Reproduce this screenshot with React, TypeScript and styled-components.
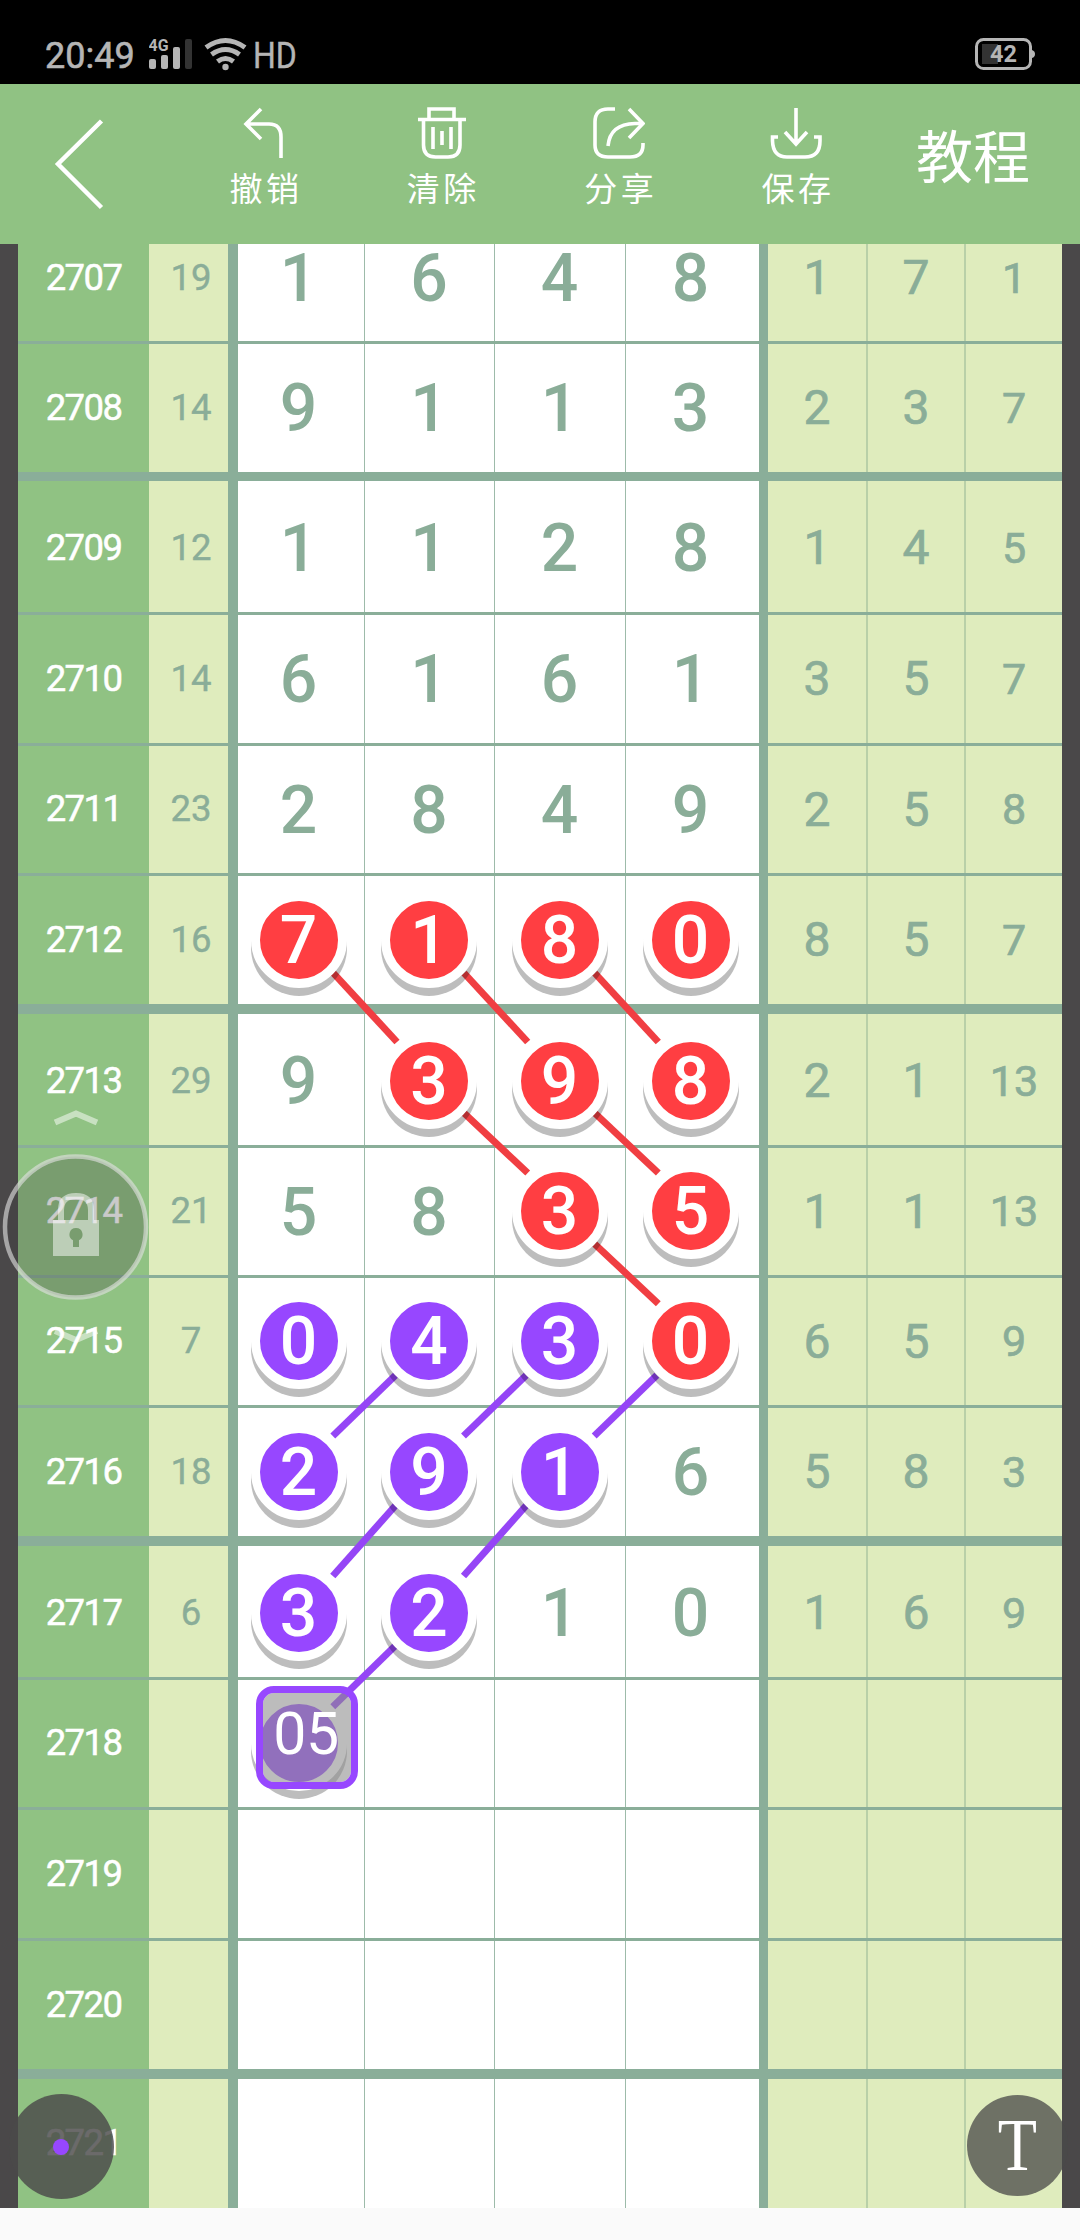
import React from "react";
import styled, { createGlobalStyle } from "styled-components";

const GREEN = "#90c283";
const LIME = "#dfecbd";
const LINE = "#8aae99";
const DIGIT = "#8aad98";
const RED = "#ff3e42";
const PURPLE = "#9747ff";

type Tone = "red" | "purple";
type Entry = { n: string; tone?: Tone };
type RowData = {
  id: string;
  h: number;
  rule: number;
  sum?: string;
  digits: Entry[];
  extra: string[];
};

const tones: Record<Tone, string> = { red: RED, purple: PURPLE };

/* "7r" is a red ball, "4p" a purple one, a bare digit is plain text. */
const parse = (s: string): Entry[] =>
  s.split(" ").map((t) => ({
    n: t[0] === "_" ? "" : t[0],
    tone: t[1] === "r" ? "red" : t[1] === "p" ? "purple" : undefined,
  }));

const row = (id: string, h: number, rule: number, sum = "", digits = "_ _ _ _", extra = ""): RowData => ({
  id, h, rule, sum, digits: parse(digits), extra: extra ? extra.split(" ") : ["", "", ""],
});

const rows: RowData[] = [
  row("2707", 129, 3, "19", "1 6 4 8", "1 7 1"),
  row("2708", 137, 9, "14", "9 1 1 3", "2 3 7"),
  row("2709", 134, 3, "12", "1 1 2 8", "1 4 5"),
  row("2710", 131, 3, "14", "6 1 6 1", "3 5 7"),
  row("2711", 130, 3, "23", "2 8 4 9", "2 5 8"),
  row("2712", 138, 10, "16", "7r 1r 8r 0r", "8 5 7"),
  row("2713", 134, 3, "29", "9 3r 9r 8r", "2 1 13"),
  row("2714", 130, 3, "21", "5 8 3r 5r", "1 1 13"),
  row("2715", 130, 3, "7", "0p 4p 3p 0r", "6 5 9"),
  row("2716", 138, 10, "18", "2p 9p 1p 6", "5 8 3"),
  row("2717", 134, 3, "6", "3p 2p 1 0", "1 6 9"),
  row("2718", 130, 3, "", "_p _ _ _"),
  row("2719", 131, 3),
  row("2720", 138, 10),
  row("2721", 132, 3),
];

const colX = [298.3, 429, 559.7, 690.3];
const rowY: Record<number, number> = { 12: 939, 13: 1079, 14: 1210, 15: 1340.7, 16: 1471, 17: 1611, 18: 1741.7 };
const links: [number, number, number, number, Tone][] = [
  [12, 0, 13, 1, "red"], [13, 1, 14, 2, "red"], [14, 2, 15, 3, "red"],
  [12, 1, 13, 2, "red"], [13, 2, 14, 3, "red"], [12, 2, 13, 3, "red"],
  [15, 1, 16, 0, "purple"], [15, 2, 16, 1, "purple"], [16, 1, 17, 0, "purple"],
  [15, 3, 16, 2, "purple"], [16, 2, 17, 1, "purple"], [17, 1, 18, 0, "purple"],
];

/* How far each end of a link stays from the centre of its ball. */
const trims: Record<Tone, [number, number, number, number]> = {
  red: [35, 34, -32, -37],
  purple: [-33.5, 34.5, 34.5, -35],
};

const Global = createGlobalStyle`
  body { margin: 0; background: #fafafa; }
  * { box-sizing: border-box; }
`;

const Screen = styled.div`
  position: relative;
  width: 1080px;
  height: 2240px;
  overflow: hidden;
  background: #fafafa;
  font-family: Roboto, "Noto Sans CJK SC", sans-serif;
`;

const StatusBar = styled.div`
  height: 84px;
  display: flex;
  align-items: flex-start;
  padding: 34px 44px 0 45px;
  background: #000;
  color: #b5b5b5;
`;
const Clock = styled.span`
  width: 104px;
  font-size: 36px;
  line-height: 44px;
  -webkit-text-stroke: 0.6px currentColor;
`;
const Signal = styled.svg`
  width: 106px;
  height: 42px;
`;
const Hd = styled.span`
  font-size: 36px;
  line-height: 44px;
  margin-right: auto;
  margin-left: -2px;
  transform: scaleX(0.89);
  transform-origin: left;
  -webkit-text-stroke: 0.4px currentColor;
`;
const Battery = styled.svg`
  width: 61px;
  height: 34px;
  margin-top: 3px;
`;

const Header = styled.header`
  height: 160px;
  display: flex;
  background: ${GREEN};
  color: #fff;
`;
const BackButton = styled.div`
  width: 175.5px;
  padding: 33px 0 0 52px;
`;
const Tool = styled.div`
  width: 177.4px;
  display: flex;
  flex-direction: column;
  align-items: center;
  padding-top: 23px;
`;
const ToolLabel = styled.span`
  margin-top: 6px;
  font-size: 33px;
  line-height: 48px;
  letter-spacing: 3.5px;
  padding-left: 3.5px;
`;
const Title = styled.div`
  margin-left: 31px;
  font-size: 57px;
  line-height: 80px;
  padding-top: 35px;
  white-space: nowrap;
`;

const Viewport = styled.main`
  position: relative;
  height: 1964px;
  overflow: hidden;
  background: #4a4849;
`;
const Table = styled.div`
  width: 1044px;
  margin: -29px 0 0 18px;
`;
const Row = styled.div<{ $h: number; $rule: number }>`
  --nudge: ${(p) => (p.$h === 134 ? 3 : 0)}px;
  display: grid;
  grid-template-columns: 131px 79px 10px 521px 9px 294px;
  height: ${(p) => p.$h}px;
  background: ${LINE};
  padding-bottom: ${(p) => p.$rule}px;
`;
const Cell = styled.div`
  display: flex;
  align-items: center;
  justify-content: center;
  padding-top: var(--nudge);
  line-height: 1;
`;
const Period = styled(Cell)`
  background: ${GREEN};
  color: #fff;
  font-size: 36.5px;
  letter-spacing: -1.6px;
  -webkit-text-stroke: 0.5px currentColor;
`;
const Sum = styled(Cell)`
  background: ${LIME};
  color: ${DIGIT};
  font-size: 36.5px;
  padding-left: 5px;
  -webkit-text-stroke: 0.4px currentColor;
`;
const Divider = styled.div`
  background: ${LINE};
`;
const Digits = styled.div`
  display: grid;
  grid-template-columns: 127px 130px 131px 133px;
  background: #fff;
`;
const DigitCell = styled(Cell)`
  position: relative;
  color: ${DIGIT};
  font-size: 66px;
  font-weight: 500;
  line-height: 54px;
  border-right: 1px solid #9dbbaa;
  padding-right: 1px;
  &:first-child { padding-right: 5px; }
  &:last-child { border-right: 0; padding-right: 4px; }
`;
const Digit = styled.span`
  padding-top: 2px;
`;
const Extras = styled.div`
  display: grid;
  grid-template-columns: 100px 98px 96px;
  background: ${LIME};
`;
const ExtraCell = styled(Cell)`
  color: ${DIGIT};
  font-size: 48px;
  -webkit-text-stroke: 0.7px currentColor;
  border-right: 2px solid #b9d0a8;
  &:last-child { border-right: 0; font-size: 43px; }
`;
const Ball = styled.div<{ $tone: Tone }>`
  position: relative;
  z-index: 2;
  width: 96px;
  height: 96px;
  flex: none;
  margin-top: -1px;
  display: flex;
  align-items: center;
  justify-content: center;
  border: 9px solid #fff;
  border-radius: 50%;
  background: ${(p) => tones[p.$tone]};
  box-shadow: 0 8px 0 rgba(0, 0, 0, 0.26);
  color: #fff;
`;
const Pick = styled.div`
  position: absolute;
  z-index: 3;
  left: 18px;
  top: 6px;
  width: 102px;
  height: 103px;
  border: 7px solid ${PURPLE};
  border-radius: 18px;
  background: rgba(141, 141, 141, 0.59);
  background-clip: padding-box;
  color: #fff;
  font-size: 59px;
  font-weight: 400;
  line-height: 82px;
  letter-spacing: -0.5px;
  padding-right: 2px;
  text-align: center;
`;
const LinkLayer = styled.svg`
  position: absolute;
  z-index: 1;
  left: 0;
  top: 0;
`;

const LockDial = styled.svg`
  position: absolute;
  z-index: 4;
  left: 0;
  top: 860px;
`;
const RoundButton = styled.div<{ $x: number; $y: number; $size: number; $alpha: number }>`
  position: absolute;
  z-index: 4;
  left: ${(p) => p.$x}px;
  top: ${(p) => p.$y}px;
  width: ${(p) => p.$size}px;
  height: ${(p) => p.$size}px;
  display: flex;
  align-items: center;
  justify-content: center;
  border-radius: 50%;
  background: rgba(74, 73, 73, ${(p) => p.$alpha});
`;
const Dot = styled.span`
  width: 16px;
  height: 16px;
  border-radius: 50%;
  background: ${PURPLE};
`;
const TextGlyph = styled.span`
  color: #fff;
  font-family: "Liberation Serif", serif;
  font-size: 73px;
  line-height: 1;
  transform: scaleX(0.88);
`;

const icons: Record<string, React.ReactNode> = {
  撤销: <path d="M23 2 L8 17 L23 32 M8 17 H31 Q43 17 43 30 V51" />,
  清除: (
    <path d="M13 12 V2 H38 V12 M2 12.5 H50 M7.500 12.500 V38 Q7.500 50 19.500 50 H32 Q44 50 44 38 V12.500 M17 20 V42 M26 24 V38 M35 20 V42" />
  ),
  分享: (
    <path d="M22 2 H15 Q2 2 2 15 V38 Q2 50 15 50 H37 Q50 50 50 38 V36 M36 2 L50 16.500 L36 31 M50 16.500 H42 Q17 17 15 39" />
  ),
  保存: <path d="M26 1 V36 M15 25 L26 37 L37 25 M8 30 H2.500 V34 Q3 50 17 50 H35 Q50 50 50 34 V30 H44" />,
};

function Links() {
  return (
    <LinkLayer width="1080" height="1964" viewBox="0 244 1080 1964">
      {links.map(([r1, c1, r2, c2, tone]) => {
        const [sx, sy, ex, ey] = trims[tone];
        return (
          <line
            key={`${r1}-${c1}`}
            x1={colX[c1] + sx}
            y1={rowY[r1] + sy}
            x2={colX[c2] + ex}
            y2={rowY[r2] + ey}
            stroke={tone === "red" ? "#f03e42" : "#9545f6"}
            strokeWidth="7"
          />
        );
      })}
    </LinkLayer>
  );
}

export default function App() {
  return (
    <Screen>
      <Global />
      <StatusBar>
        <Clock>20:49</Clock>
        <Signal viewBox="149 34 106 42">
          <text x="148.500" y="51" fontSize="17" fontWeight="700" textLength="20" lengthAdjust="spacingAndGlyphs" fill="#b5b5b5">4G</text>
          <g fill="#b5b5b5">
            <rect x="149" y="59" width="7" height="10" rx="2" />
            <rect x="161" y="55" width="7" height="14" rx="2" />
            <rect x="173" y="47" width="7" height="22" rx="2" />
            <rect x="185" y="39" width="7" height="30" rx="2" fill="#333" />
            <circle cx="225.500" cy="67" r="3.200" />
          </g>
          <g fill="none" stroke="#b5b5b5" strokeWidth="5">
            <path d="M206 47.500 Q225.500 33.500 245 47.500" />
            <path d="M211.500 54.500 Q225.500 44.500 239.500 54.500" />
            <path d="M217.500 61.500 Q225.500 55.500 233.500 61.500" />
          </g>
        </Signal>
        <Hd>HD</Hd>
        <Battery viewBox="0 0 61 34">
          <rect x="7" y="7" width="16" height="20" fill="#333" />
          <rect x="1.500" y="2.500" width="54" height="29" rx="7" fill="none" stroke="#b5b5b5" strokeWidth="3" />
          <path d="M57 13 Q60 14 60 17 Q60 20 57 21Z" fill="#b5b5b5" />
          <text x="28.500" y="25" fontSize="23.500" fontWeight="700" textAnchor="middle" fill="#b5b5b5">42</text>
        </Battery>
      </StatusBar>

      <Header>
        <BackButton>
          <svg width="52" height="94" viewBox="0 0 52 94">
            <path fill="none" stroke="#fff" strokeWidth="4.500" d="M49.500 4 L6 47 L49.500 90.500" />
          </svg>
        </BackButton>
        {Object.entries(icons).map(([label, icon]) => (
          <Tool key={label}>
            <svg width="52" height="53" viewBox="0 0 52 53" fill="none" stroke="#fff" strokeWidth={3.6}>
              {icon}
            </svg>
            <ToolLabel>{label}</ToolLabel>
          </Tool>
        ))}
        <Title>教程</Title>
      </Header>

      <Viewport>
        <Table>
          {rows.map((r) => (
            <Row key={r.id} $h={r.h} $rule={r.rule}>
              <Period>{r.id}</Period>
              <Sum>{r.sum}</Sum>
              <Divider />
              <Digits>
                {r.digits.map((e, i) => (
                  <DigitCell key={i}>
                    {e.tone ? (
                      <Ball $tone={e.tone}>
                        <Digit>{e.n}</Digit>
                      </Ball>
                    ) : (
                      <Digit>{e.n}</Digit>
                    )}
                    {r.id === "2718" && i === 0 && <Pick>05</Pick>}
                  </DigitCell>
                ))}
              </Digits>
              <Divider />
              <Extras>
                {r.extra.map((n, i) => (
                  <ExtraCell key={i}>{n}</ExtraCell>
                ))}
              </Extras>
            </Row>
          ))}
        </Table>
        <Links />
        <LockDial width="152" height="250" viewBox="0 1104 152 250">
          <circle cx="75.500" cy="1227" r="70.500" fill="rgba(58,60,60,0.27)" stroke="rgba(225,225,225,0.62)" strokeWidth="4.500" />
          <g fill="none" stroke="rgba(255,255,255,0.5)" strokeWidth="6">
            <path d="M55 1122.500 L76 1113.500 L97 1122.500" />
            <path d="M55 1331 L76 1340 L97 1331" />
            <path d="M61 1220 V1210 Q61 1196 76 1196 Q91 1196 91 1210 V1220" />
          </g>
          <path
            fill="rgba(255,255,255,0.5)"
            fillRule="evenodd"
            d="M53 1220 H99 V1256 H53Z M76 1228 a6.500 6.500 0 0 0 -3 12.300 V1247 H79 V1240.300 a6.500 6.500 0 0 0 -3 -12.300Z"
          />
        </LockDial>
        <RoundButton $x={8.5} $y={1850} $size={105} $alpha={0.82}>
          <Dot />
        </RoundButton>
        <RoundButton $x={967} $y={1851} $size={101} $alpha={0.76}>
          <TextGlyph>T</TextGlyph>
        </RoundButton>
      </Viewport>
    </Screen>
  );
}
